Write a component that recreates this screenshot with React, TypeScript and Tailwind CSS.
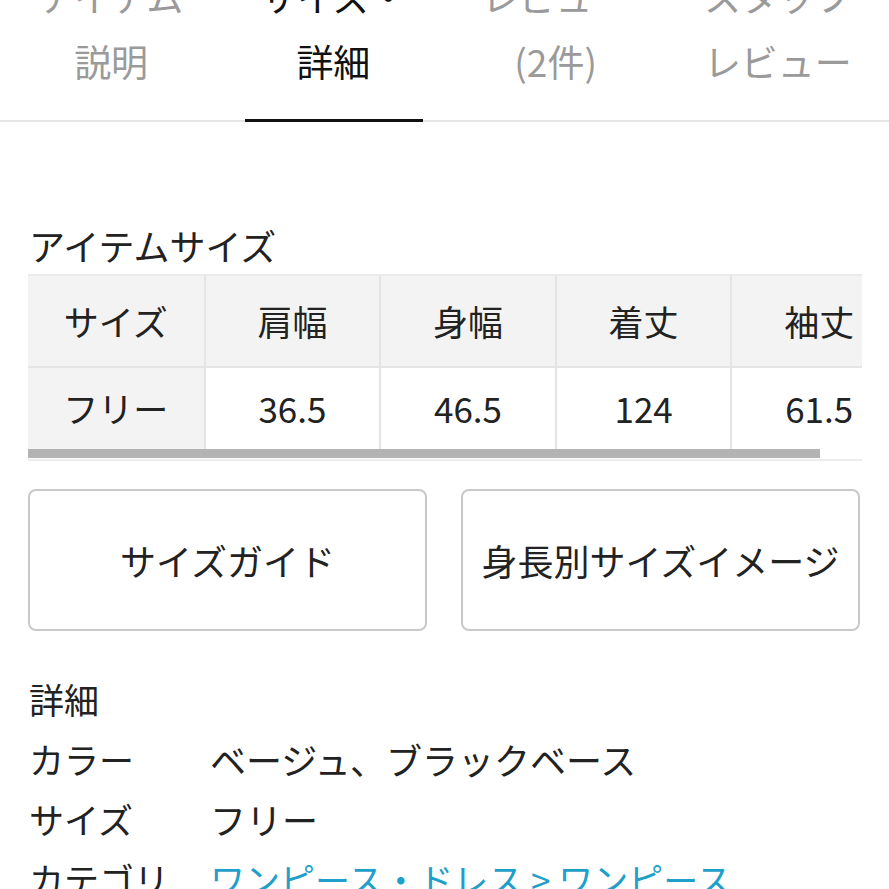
const TABS = [
  { top: 'アイテム', bottom: '説明', active: false },
  { top: 'サイズ・', bottom: '詳細', active: true },
  { top: 'レビュー', bottom: '(2件)', active: false },
  { top: 'スタッフ', bottom: 'レビュー', active: false },
];

const HEAD = ['サイズ', '肩幅', '身幅', '着丈', '袖丈'];
const ROW = ['フリー', '36.5', '46.5', '124', '61.5'];

const DETAILS = [
  { label: 'カラー', value: 'ベージュ、ブラックベース' },
  { label: 'サイズ', value: 'フリー' },
];

export default function App() {
  return (
    <div className="w-[889px] h-[889px] overflow-hidden bg-white text-[#222] font-['Noto_Sans_CJK_JP','Noto_Sans',sans-serif]">
      {/* Tabs */}
      <div className="grid grid-cols-4 border-b-2 border-[#e6e6e6] -mt-[29px]">
        {TABS.map((t) => (
          <div key={t.bottom} className="relative flex flex-col items-center pb-[29px]">
            <span className={`text-[37px] leading-[50px] mb-[10px] ${t.active ? 'text-[#111]' : 'text-[#9a9a9a]'}`}>{t.top}</span>
            <span className={`text-[37px] leading-[60px] ${t.active ? 'text-[#111]' : 'text-[#9a9a9a]'}`}>{t.bottom}</span>
            {t.active && <div className="absolute -bottom-[2px] left-[23px] right-[22px] h-[3px] bg-[#111]" />}
          </div>
        ))}
      </div>

      <div className="px-[28px]">
        <h2 className="mt-[97px] text-[36px] leading-[52px] pl-[1px]">アイテムサイズ</h2>

        {/* Size table */}
        <div className="mt-[3px] w-[834px] overflow-hidden">
          <div className="w-[878px] border-t-2 border-[#ebebeb]">
            <div className="grid grid-cols-5 h-[92px] bg-[#f3f3f3] border-b-2 border-[#e4e4e4]">
              {HEAD.map((h, i) => (
                <div key={h} className={`flex items-center justify-center text-[35px] ${i > 0 ? 'border-l-2 border-[#e4e4e4]' : ''}`}>
                  {h}
                </div>
              ))}
            </div>
            <div className="grid grid-cols-5 h-[81px]">
              {ROW.map((v, i) => (
                <div key={v} className={`flex items-center justify-center text-[35px] ${i === 0 ? 'bg-[#f3f3f3]' : 'border-l-2 border-[#e4e4e4]'}`}>
                  {v}
                </div>
              ))}
            </div>
          </div>
          <div className="h-[9px] w-[792px] bg-[#b3b3b3]" />
          <div className="mt-[1px] h-[2px] w-full bg-[#ececec]" />
        </div>

        {/* Buttons */}
        <div className="mt-[28px] grid grid-cols-2 gap-[34px] w-[832px]">
          <button className="h-[142px] rounded-[8px] border-2 border-[#c9c9c9] text-[36px] bg-white">サイズガイド</button>
          <button className="h-[142px] rounded-[8px] border-2 border-[#c9c9c9] text-[36px] bg-white">身長別サイズイメージ</button>
        </div>

        {/* Details */}
        <div className="mt-[38px] pl-[1px]">
          <div className="text-[35px] leading-[60px]">詳細</div>
          {DETAILS.map((d) => (
            <div key={d.label} className="flex text-[35px] leading-[60px]">
              <span className="w-[181px] shrink-0">{d.label}</span>
              <span className="text-[36px]">{d.value}</span>
            </div>
          ))}
          <div className="flex text-[35px] leading-[60px]">
            <span className="w-[181px] shrink-0">カテゴリ</span>
            <a className="text-[#1f9fc9]">ワンピース・ドレス &gt; ワンピース</a>
          </div>
        </div>
      </div>
    </div>
  );
}
